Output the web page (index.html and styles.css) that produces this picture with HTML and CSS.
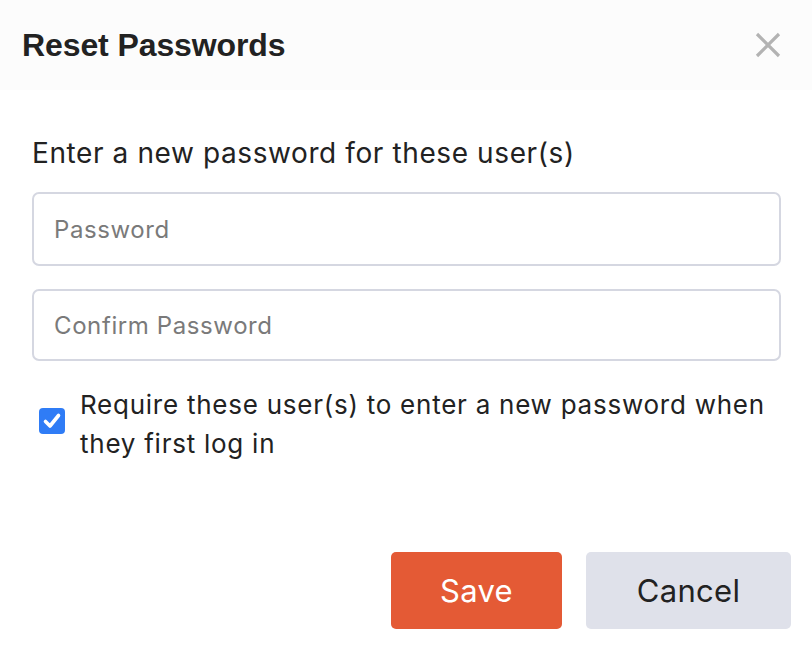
FILE: index.html
```html
<!DOCTYPE html>
<html>
<head>
<meta charset="utf-8">
<link rel="stylesheet" href="styles.css">
</head>
<body>
<div class="dialog">
  <div class="header">
    <h1 class="title">Reset Passwords</h1>
    <button class="close" aria-label="Close">
      <svg width="26" height="26" viewBox="0 0 26 26"><path d="M2 2 L24 24 M24 2 L2 24" stroke="#b3b3b3" stroke-width="3.2" fill="none"/></svg>
    </button>
  </div>
  <div class="body">
    <p class="intro">Enter a new password for these user(s)</p>
    <input class="field" type="password" placeholder="Password">
    <input class="field" type="password" placeholder="Confirm Password">
    <label class="check">
      <span class="box">
        <svg width="20" height="20" viewBox="0 0 20 20"><path d="M3.5 10.5 L8 15 L16.5 4.5" stroke="#fff" stroke-width="3.6" fill="none" stroke-linecap="round" stroke-linejoin="round"/></svg>
      </span>
      <span class="check-text">Require these user(s) to enter a new password when they first log in</span>
    </label>
  </div>
  <div class="footer">
    <button class="btn save">Save</button>
    <button class="btn cancel">Cancel</button>
  </div>
</div>
</body>
</html>
```
FILE: styles.css
```css
html, body {
  margin: 0;
  padding: 0;
  background: #ffffff;
}
body {
  font-family: Inter, "Noto Sans", sans-serif;
  color: #222222;
}
.dialog {
  width: 812px;
  height: 652px;
  display: flex;
  flex-direction: column;
}
.header {
  height: 90px;
  background: #fcfcfc;
  display: flex;
  align-items: center;
  justify-content: space-between;
  padding: 0 31px 0 22px;
  box-sizing: border-box;
}
.title {
  margin: 0;
  font-family: "Liberation Sans", Arial, sans-serif;
  font-weight: bold;
  font-size: 32px;
  letter-spacing: -0.1px;
  color: #222222;
}
.close {
  border: 0;
  background: transparent;
  padding: 0;
  width: 26px;
  height: 26px;
  display: flex;
}
.body {
  padding: 0 31px 0 32px;
  display: flex;
  flex-direction: column;
}
.intro {
  margin: 45px 0 0 0;
  font-size: 28px;
  line-height: 36px;
  letter-spacing: 0.6px;
  color: #222;
}
.field {
  margin-top: 21px;
  height: 74px;
  box-sizing: border-box;
  border: 2px solid #d5d7e1;
  border-radius: 7px;
  padding: 0 20px;
  font-family: Inter, "Noto Sans", sans-serif;
  font-size: 24px;
  letter-spacing: 0.6px;
  color: #222;
  outline: none;
}
.field + .field {
  margin-top: 23px;
  height: 72px;
}
.field::placeholder {
  color: #7a7a7a;
}
.check {
  margin-top: 26px;
  display: flex;
  align-items: flex-start;
}
.box {
  flex: none;
  width: 26px;
  height: 26px;
  margin: 21px 15px 0 7px;
  background: #2f7cf6;
  border-radius: 4px;
  display: flex;
  align-items: center;
  justify-content: center;
}
.check-text {
  font-size: 26px;
  line-height: 39px;
  letter-spacing: 0.75px;
  color: #222;
  margin-top: -2px;
}
.footer {
  margin-top: auto;
  padding: 0 21px 23px 0;
  display: flex;
  justify-content: flex-end;
  gap: 24px;
}
.btn {
  height: 77px;
  border: 0;
  border-radius: 5px;
  font-family: Inter, "Noto Sans", sans-serif;
  font-size: 31px;
  letter-spacing: 0.3px;
}
.save {
  width: 171px;
  background: #e45a35;
  color: #ffffff;
}
.cancel {
  width: 205px;
  background: #dfe1ea;
  color: #222222;
}
```
